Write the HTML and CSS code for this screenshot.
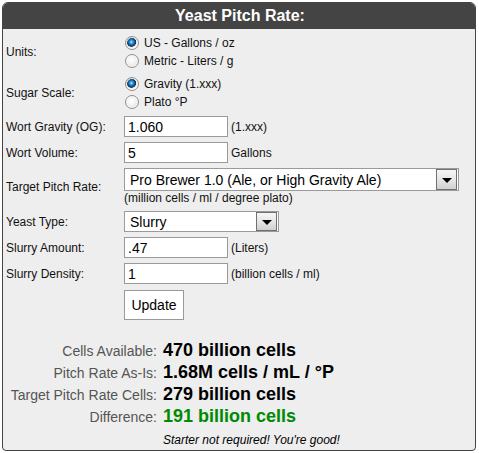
FILE: index.html
```html
<!DOCTYPE html>
<html>
<head>
<meta charset="utf-8">
<title>Yeast Pitch Rate</title>
<link rel="stylesheet" href="styles.css">
</head>
<body>
<div class="panel">
  <div class="header">Yeast Pitch Rate:</div>
  <form class="form">
    <div class="label">Units:</div>
    <div class="radios">
      <label class="radio"><input type="radio" name="units" checked><span>US - Gallons / oz</span></label>
      <label class="radio"><input type="radio" name="units"><span>Metric - Liters / g</span></label>
    </div>

    <div class="label">Sugar Scale:</div>
    <div class="radios">
      <label class="radio"><input type="radio" name="scale" checked><span>Gravity (1.xxx)</span></label>
      <label class="radio"><input type="radio" name="scale"><span>Plato °P</span></label>
    </div>

    <div class="label">Wort Gravity (OG):</div>
    <div class="field"><input class="text" type="text" value="1.060"><span class="unit">(1.xxx)</span></div>

    <div class="label">Wort Volume:</div>
    <div class="field"><input class="text" type="text" value="5"><span class="unit">Gallons</span></div>

    <div class="label">Target Pitch Rate:</div>
    <div class="stack">
      <div class="select-wrap wide">
        <select class="select"><option>Pro Brewer 1.0 (Ale, or High Gravity Ale)</option></select>
        <span class="arrow"></span>
      </div>
      <div class="hint">(million cells / ml / degree plato)</div>
    </div>

    <div class="label">Yeast Type:</div>
    <div class="field">
      <div class="select-wrap narrow">
        <select class="select"><option>Slurry</option></select>
        <span class="arrow"></span>
      </div>
    </div>

    <div class="label">Slurry Amount:</div>
    <div class="field"><input class="text" type="text" value=".47"><span class="unit">(Liters)</span></div>

    <div class="label">Slurry Density:</div>
    <div class="field"><input class="text" type="text" value="1"><span class="unit">(billion cells / ml)</span></div>

    <div class="label"></div>
    <div class="field"><button type="button" class="button">Update</button></div>
  </form>

  <div class="results">
    <div class="r-label">Cells Available:</div>
    <div class="r-value">470 billion cells</div>
    <div class="r-label">Pitch Rate As-Is:</div>
    <div class="r-value">1.68M cells / mL / °P</div>
    <div class="r-label">Target Pitch Rate Cells:</div>
    <div class="r-value">279 billion cells</div>
    <div class="r-label">Difference:</div>
    <div class="r-value good">191 billion cells</div>
    <div class="r-label"></div>
    <div class="note">Starter not required! You're good!</div>
  </div>
</div>
</body>
</html>
```

FILE: styles.css
```css
html, body {
  margin: 0;
  padding: 0;
  background: #fff;
}
body {
  padding: 2px;
  font-family: "Liberation Sans", Arial, sans-serif;
  color: #111;
}
.panel {
  width: 472px;
  height: 447px;
  border: 1px solid #444;
  border-radius: 6px 6px 4px 4px;
  background: #eee;
  overflow: hidden;
}
.header {
  height: 26px;
  background: #444;
  color: #fff;
  font-weight: bold;
  font-size: 16px;
  line-height: 26px;
  text-align: center;
  padding-left: 2px;
}
.form {
  display: grid;
  grid-template-columns: 118px 1fr;
  row-gap: 5px;
  padding: 5px 0 0 3px;
  margin: 0;
}
.label {
  display: flex;
  align-items: center;
  font-size: 12px;
}
.radios {
  display: flex;
  flex-direction: column;
}
.radio {
  display: flex;
  align-items: center;
  height: 18px;
  font-size: 12px;
}
.radio input {
  appearance: none;
  -webkit-appearance: none;
  box-sizing: border-box;
  width: 14px;
  height: 14px;
  margin: 0 5px 0 1px;
  border-radius: 50%;
  border: 1px solid #8e8f8f;
  background: radial-gradient(circle at 45% 40%, #ffffff 0, #f3f3f3 40%, #d6d6d6 100%);
  box-shadow: inset 0 0 0 1px #fafafa;
}
.radio input:checked {
  background: radial-gradient(circle at 45% 42%, #c6ecff 0, #42a8ea 1.3px, #15629f 3px, #0e2f52 4.4px, #e6e6e6 5px, #f6f6f6 70%, #d8d8d8 100%);
}
.field {
  display: flex;
  align-items: center;
}
.text {
  box-sizing: border-box;
  width: 104px;
  height: 21px;
  margin: 0;
  padding: 0 3px;
  border: 1px solid #999;
  background: #fff;
  font-family: "Liberation Sans", Arial, sans-serif;
  font-size: 14px;
  color: #000;
  outline: none;
}
.unit {
  margin-left: 3px;
  font-size: 12px;
}
.stack {
  display: flex;
  flex-direction: column;
}
.select-wrap {
  position: relative;
  box-sizing: border-box;
}
.select-wrap.wide {
  width: 335px;
  height: 23px;
}
.select-wrap.narrow {
  width: 155px;
  height: 21px;
}
.select {
  appearance: none;
  -webkit-appearance: none;
  box-sizing: border-box;
  width: 100%;
  height: 100%;
  margin: 0;
  padding: 0 0 0 5px;
  border: 1px solid #9a9a9a;
  border-radius: 0;
  background: #fff;
  font-family: "Liberation Sans", Arial, sans-serif;
  font-size: 14px;
  color: #000;
  outline: none;
}
.arrow {
  position: absolute;
  top: 1px;
  right: 2px;
  bottom: 1px;
  width: 21px;
  box-sizing: border-box;
  border: 1px solid #707070;
  background: linear-gradient(#f6f6f6, #e6e6e6 50%, #d0d0d0);
  pointer-events: none;
}
.arrow::after {
  content: "";
  position: absolute;
  left: 50%;
  top: 50%;
  margin-left: -5px;
  margin-top: -2px;
  border-left: 5px solid transparent;
  border-right: 5px solid transparent;
  border-top: 5px solid #000;
}
.hint {
  font-size: 12px;
  line-height: 15px;
}
.button {
  box-sizing: border-box;
  width: 60px;
  height: 30px;
  margin: 1px 0 0 0;
  border: 1px solid #999;
  background: #fff;
  font-family: "Liberation Sans", Arial, sans-serif;
  font-size: 14px;
  color: #000;
  padding: 0;
}
.results {
  display: grid;
  grid-template-columns: 154px 1fr;
  column-gap: 6px;
  align-items: baseline;
  margin-top: 20px;
}
.r-label {
  text-align: right;
  font-size: 14px;
  color: #555;
  line-height: 21px;
}
.r-value {
  font-size: 18px;
  font-weight: bold;
  color: #000;
  line-height: 21px;
}
.r-value.good {
  color: #008a00;
}
.note {
  font-size: 12px;
  font-style: italic;
  color: #000;
  line-height: 21px;
  padding-top: 2px;
}
```
